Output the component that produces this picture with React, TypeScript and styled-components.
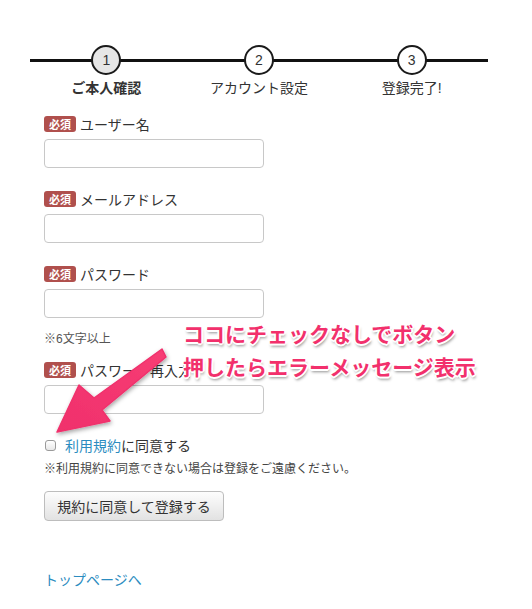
import styled, { createGlobalStyle } from 'styled-components'

const GlobalStyle = createGlobalStyle`
  html, body {
    margin: 0;
    padding: 0;
    background: #fff;
  }
  body {
    font-family: 'Liberation Sans', 'Noto Sans CJK JP', sans-serif;
    color: #333;
  }
`

const steps = ['ご本人確認', 'アカウント設定', '登録完了!']

const fields = [
  { label: 'ユーザー名' },
  { label: 'メールアドレス' },
  { label: 'パスワード', help: '※6文字以上' },
  { label: 'パスワード再入力' },
]

const App = () => {
  return (
    <Page>
      <GlobalStyle />
      <Stepper>
        {steps.map((step, i) => (
          <Step key={step}>
            <Circle active={i === 0}>{i + 1}</Circle>
            <StepLabel active={i === 0}>{step}</StepLabel>
          </Step>
        ))}
      </Stepper>

      <Form>
        {fields.map((f) => (
          <Field key={f.label} hasHelp={!!f.help}>
            <LabelRow>
              <Badge>必須</Badge>
              {f.label}
            </LabelRow>
            <Input type={f.label.startsWith('パスワード') ? 'password' : 'text'} />
            {f.help && <Help>{f.help}</Help>}
          </Field>
        ))}

        <CheckRow>
          <Check type="checkbox" />
          <span>
            <Link href="#">利用規約</Link>に同意する
          </span>
        </CheckRow>
        <Note>※利用規約に同意できない場合は登録をご遠慮ください。</Note>
        <Button type="button">規約に同意して登録する</Button>
        <BottomLink href="#">トップページへ</BottomLink>
      </Form>

      <Arrow viewBox="0 0 532 609" width="532" height="609">
        <defs>
          <filter id="shadow" x="-20%" y="-20%" width="140%" height="140%">
            <feDropShadow dx="1" dy="2" stdDeviation="2" floodColor="#000" floodOpacity="0.35" />
          </filter>
          <linearGradient id="pink" x1="0" y1="1" x2="1" y2="0">
            <stop offset="0" stopColor="#f0306c" />
            <stop offset="1" stopColor="#f73d74" />
          </linearGradient>
        </defs>
        <polygon
          points="162,349 166,357 102,410 110,421 57,432 79,385 94,398"
          fill="url(#pink)"
          stroke="#f0306c"
          strokeWidth="1.5"
          strokeLinejoin="round"
          filter="url(#shadow)"
        />
      </Arrow>

      <Callout>
        ココにチェックなしでボタン
        <br />
        押したらエラーメッセージ表示
      </Callout>
    </Page>
  )
}

const Page = styled.div`
  position: relative;
  width: 532px;
  height: 609px;
  padding-top: 45px;
  box-sizing: border-box;
  overflow: hidden;
`

const Stepper = styled.div`
  position: relative;
  margin-left: 30px;
  width: 458px;
  display: grid;
  grid-template-columns: repeat(3, 1fr);

  &::before {
    content: '';
    position: absolute;
    left: 0;
    right: 0;
    top: 14px;
    height: 3px;
    background: #111;
  }
`

const Step = styled.div`
  display: flex;
  flex-direction: column;
  align-items: center;
  position: relative;
`

const Circle = styled.div<{ active?: boolean }>`
  width: 30px;
  height: 30px;
  box-sizing: border-box;
  border: 2px solid #1a1a1a;
  border-radius: 50%;
  background: ${(p) => (p.active ? '#e6e6e6' : '#fff')};
  display: flex;
  align-items: center;
  justify-content: center;
  font-size: 14px;
  color: #333;
`

const StepLabel = styled.div<{ active?: boolean }>`
  margin-top: 3px;
  font-size: 14px;
  line-height: 20px;
  font-weight: ${(p) => (p.active ? 'bold' : 'normal')};
  color: #333;
`

const Form = styled.div`
  display: flex;
  flex-direction: column;
  align-items: flex-start;
  padding-left: 44px;
  margin-top: 16px;
`

const Field = styled.div<{ hasHelp?: boolean }>`
  display: flex;
  flex-direction: column;
  margin-bottom: ${(p) => (p.hasHelp ? '12px' : '21px')};
`

const LabelRow = styled.div`
  display: flex;
  align-items: center;
  gap: 4px;
  height: 20px;
  font-size: 14px;
  color: #333;
`

const Badge = styled.span`
  display: inline-flex;
  align-items: center;
  justify-content: center;
  width: 32px;
  height: 16px;
  border-radius: 3px;
  background: #b0504d;
  color: #fff;
  font-size: 11px;
  font-weight: bold;
`

const Input = styled.input`
  margin-top: 5px;
  width: 220px;
  height: 29px;
  box-sizing: border-box;
  border: 1px solid #c8c8c8;
  border-radius: 4px;
  padding: 0 8px;
  outline: none;
  background: #fff;
`

const Help = styled.div`
  margin-top: 13px;
  font-size: 12px;
  line-height: 17px;
  color: #555;
`

const CheckRow = styled.label`
  display: flex;
  align-items: center;
  gap: 9px;
  height: 20px;
  font-size: 14px;
  color: #333;
`

const Check = styled.input`
  appearance: none;
  margin: 0 0 0 1px;
  width: 11px;
  height: 11px;
  border: 1px solid #9a9a9a;
  border-radius: 3px;
  background: linear-gradient(#fff, #e8e8e8);
`

const Link = styled.a`
  color: #2b8cc0;
  text-decoration: none;
`

const Note = styled.div`
  margin-top: 6px;
  font-size: 12px;
  line-height: 17px;
  color: #444;
`

const Button = styled.button`
  margin-top: 13px;
  width: 180px;
  height: 30px;
  border: 1px solid #bdbdbd;
  border-radius: 4px;
  background: linear-gradient(#fdfdfd, #e2e2e2);
  font-family: 'Liberation Sans', 'Noto Sans CJK JP', sans-serif;
  font-size: 14px;
  color: #333;
`

const BottomLink = styled.a`
  margin-top: 49px;
  font-size: 14px;
  line-height: 20px;
  color: #2b8cc0;
  text-decoration: none;
`

const Arrow = styled.svg`
  position: absolute;
  left: 0;
  top: 0;
  pointer-events: none;
`

const Callout = styled.div`
  position: absolute;
  left: 183px;
  top: 318px;
  font-size: 21px;
  line-height: 33px;
  font-weight: bold;
  color: #f2306c;
  white-space: nowrap;
  text-shadow: -1px -1px 0 #fff, 1px -1px 0 #fff, -1px 1px 0 #fff,
    1px 1px 0 #fff, 0 -2px 0 #fff, 0 2px 0 #fff, -2px 0 0 #fff, 2px 0 0 #fff,
    1px 3px 3px rgba(0, 0, 0, 0.45);
`

export default App
